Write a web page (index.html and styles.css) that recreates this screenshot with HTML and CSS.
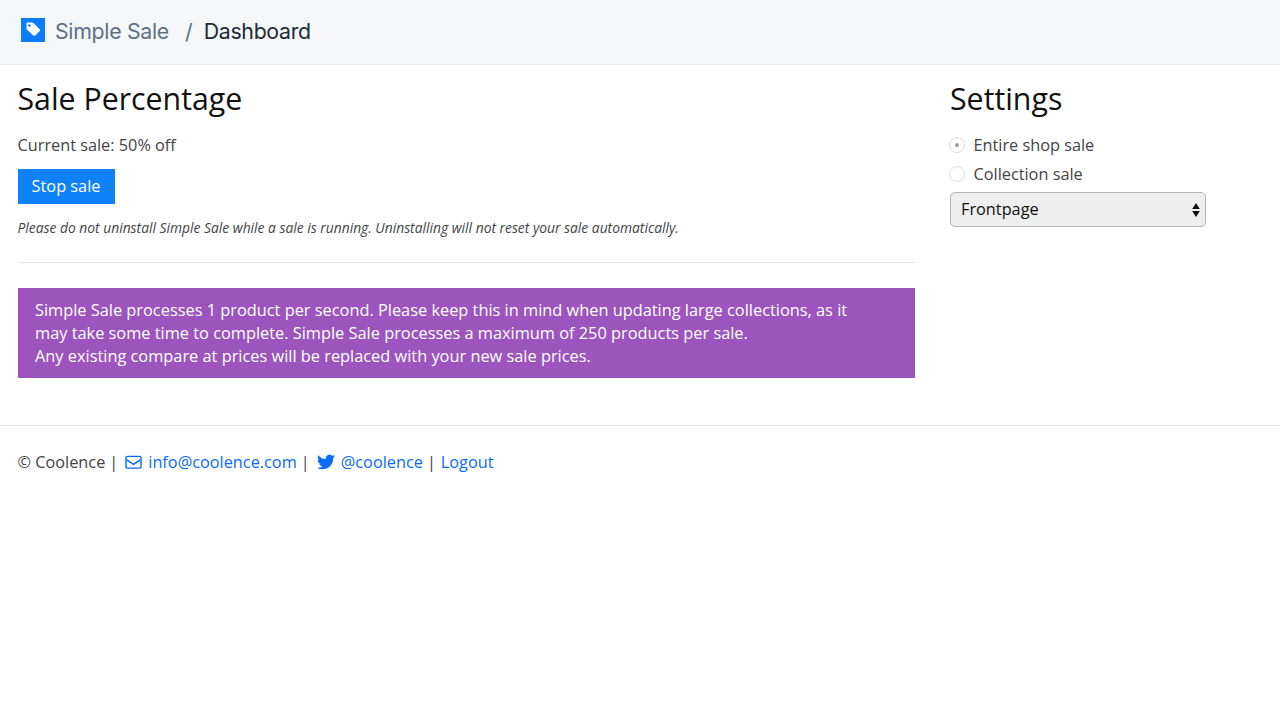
FILE: index.html
```html
<!DOCTYPE html>
<html lang="en">
<head>
<meta charset="utf-8">
<title>Simple Sale - Dashboard</title>
<link rel="stylesheet" href="styles.css">
</head>
<body>
<header class="topbar">
  <svg class="logo" viewBox="0 0 24 24" width="24" height="24" aria-hidden="true">
    <rect width="24" height="24" fill="#0a7cff"/>
    <path d="M6.500 4.500h4.700c.5 0 .9.2 1.200.5l6.100 6.100c.6.6.6 1.500 0 2.100l-4.200 4.200c-.6.6-1.500.6-2.100 0L6.100 11.800c-.4-.3-.6-.7-.6-1.200V5.500c0-.6.400-1 1-1z" fill="#fff"/>
    <circle cx="8.500" cy="7.500" r="1.200" fill="#0a7cff"/>
  </svg>
  <span class="brand">Simple Sale</span>
  <span class="slash">/</span>
  <span class="page">Dashboard</span>
</header>
<div class="columns">
  <main class="main">
    <h1>Sale Percentage</h1>
    <p class="current">Current sale: 50% off</p>
    <button class="stop" type="button">Stop sale</button>
    <p class="note">Please do not uninstall Simple Sale while a sale is running. Uninstalling will not reset your sale automatically.</p>
    <hr class="rule">
    <div class="notice">Simple Sale processes 1 product per second. Please keep this in mind when updating large collections, as it may take some time to complete. Simple Sale processes a maximum of 250 products per sale.<br>Any existing compare at prices will be replaced with your new sale prices.</div>
  </main>
  <aside class="side">
    <h1>Settings</h1>
    <div class="radio-row"><span class="radio checked"></span><span>Entire shop sale</span></div>
    <div class="radio-row"><span class="radio"></span><span>Collection sale</span></div>
    <div class="select"><span>Frontpage</span>
      <svg class="arrows" viewBox="0 0 8 16" width="8" height="16" aria-hidden="true"><path d="M4 1l3.800 6H.2zM4 15L.2 9h7.600z" fill="#111"/></svg>
    </div>
  </aside>
</div>
<footer class="footer">
  <span>© Coolence</span><span class="sep">|</span>
  <a href="#"><svg class="ico" viewBox="0 0 18 16" width="17" height="16" aria-hidden="true"><rect x="1" y="2" width="16" height="12.500" rx="2" fill="none" stroke="#0a6cf5" stroke-width="1.500"/><path d="M1.500 5.500L9 10.500l7.500-5" fill="none" stroke="#0a6cf5" stroke-width="1.500"/></svg>info@coolence.com</a><span class="sep">|</span>
  <a href="#"><svg class="ico" viewBox="0 0 24 24" width="18" height="18" aria-hidden="true"><path d="M23.950 4.570a10 10 0 0 1-2.820.77 4.960 4.960 0 0 0 2.160-2.720c-.95.550-2 .96-3.130 1.190a4.920 4.920 0 0 0-8.380 4.480C7.690 8.090 4.060 6.130 1.640 3.160a4.820 4.820 0 0 0-.67 2.480c0 1.710.87 3.210 2.190 4.100a4.900 4.900 0 0 1-2.230-.61v.06a4.920 4.920 0 0 0 3.950 4.830 5 5 0 0 1-2.210.08 4.940 4.940 0 0 0 4.600 3.420A9.870 9.870 0 0 1 0 19.540a14 14 0 0 0 7.560 2.210c9.050 0 14-7.500 14-13.980 0-.21 0-.42-.02-.63a9.940 9.940 0 0 0 2.410-2.570z" fill="#0a6cf5"/></svg>@coolence</a><span class="sep sep-last">|</span>
  <a href="#">Logout</a>
</footer>
</body>
</html>
```
FILE: styles.css
```css
* { box-sizing: border-box; }
html, body { margin: 0; padding: 0; }
body {
  background: #fff;
  color: #444;
  font-family: "Open Sans", sans-serif;
  font-size: 16.3px;
  line-height: 24px;
}
.topbar {
  height: 65px;
  background: #f4f6f8;
  border-bottom: 1px solid #e8eaed;
  display: flex;
  align-items: center;
  padding: 0 0 2px 21px;
  font-family: Inter, sans-serif;
  font-size: 21.3px;
}
.logo { flex: none; margin-right: 10px; margin-top: -3px; }
.brand { color: #5f7183; letter-spacing: -0.3px; }
.slash { color: #5f7183; margin: 0 11px 0 16px; }
.page { color: #212b36; letter-spacing: -0.3px; }
.columns { display: flex; padding: 0 17.5px; }
.main { width: 897.5px; flex: none; }
.side { margin-left: 35px; width: 256px; }
h1 {
  margin: 14px 0 0;
  font-size: 30.3px;
  line-height: 39px;
  font-weight: 400;
  color: #111;
}
.current { margin: 15px 0 0; }
.stop {
  display: block;
  margin-top: 11.500px;
  width: 97px;
  height: 35px;
  border: 0;
  padding: 0;
  background: #0f82fa;
  color: #fff;
  font: 500 16.3px/24px "Open Sans", sans-serif;
}
.note { margin: 12px 0 0; font-size: 13.83px; line-height: 24px; font-style: italic; }
.rule { margin: 22px 0 25px; border: 0; border-top: 1px solid #e6e6e6; }
.notice {
  background: #9b55bd;
  color: #fff;
  font-size: 16.35px;
  font-weight: 500;
  padding: 11px 60px 10px 17.5px;
  line-height: 23px;
  height: 90px;
}
.radio-row { display: flex; align-items: center; height: 29px; gap: 8.500px; }
.radio-row:first-of-type { margin-top: 12px; }
.radio {
  width: 16px; height: 16px; border: 1px solid #ddd; border-radius: 50%;
  margin-left: -1px; background: #fff; display: flex; align-items: center; justify-content: center;
}
.radio.checked::after { content: ""; width: 4px; height: 4px; border-radius: 50%; background: #999; }
.select {
  margin-top: 4px;
  height: 35px;
  border: 1px solid #b4b4b4;
  border-radius: 5px;
  background: #eee;
  color: #111;
  display: flex;
  align-items: center;
  justify-content: space-between;
  padding: 0 5px 2px 10px;
}
.arrows { margin-top: 2px; }
.footer {
  margin-top: 47px;
  border-top: 1px solid #e8e8e8;
  padding: 24px 17.5px 0;
  display: flex;
  align-items: center;
  white-space: pre;
}
.footer a { color: #0a6cf5; text-decoration: none; display: flex; align-items: center; }
.sep { margin: 0 7px 0 4px; }
.sep-last { margin-right: 5px; }
.ico { margin-right: 6px; flex: none; }
```
